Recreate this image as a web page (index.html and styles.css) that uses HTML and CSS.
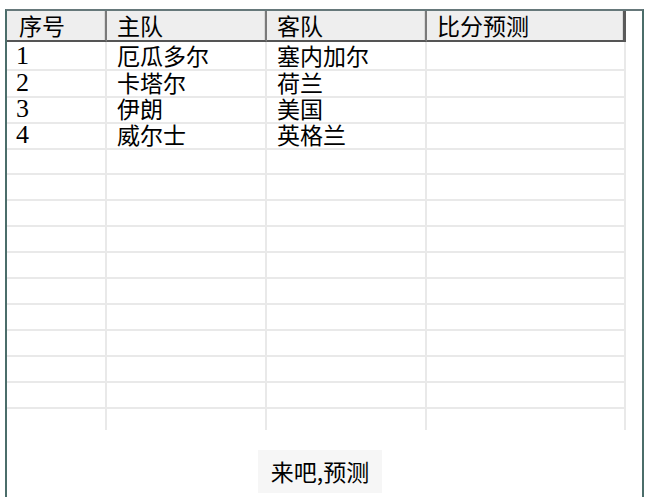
FILE: index.html
```html
<!DOCTYPE html>
<html lang="zh-CN">
<head>
<meta charset="utf-8">
<title>比分预测</title>
<link rel="stylesheet" href="styles.css">
</head>
<body>
<div class="frame">
  <div class="header">
    <div class="hcell first">序号</div>
    <div class="hcell">主队</div>
    <div class="hcell">客队</div>
    <div class="hcell">比分预测</div>
  </div>
  <div class="body">
    <div class="row top"><div class="cell num">1</div><div class="cell">厄瓜多尔</div><div class="cell">塞内加尔</div><div class="cell"></div></div>
    <div class="row"><div class="cell num">2</div><div class="cell">卡塔尔</div><div class="cell">荷兰</div><div class="cell"></div></div>
    <div class="row"><div class="cell num">3</div><div class="cell">伊朗</div><div class="cell">美国</div><div class="cell"></div></div>
    <div class="row"><div class="cell num">4</div><div class="cell">威尔士</div><div class="cell">英格兰</div><div class="cell"></div></div>
    <div class="row"><div class="cell"></div><div class="cell"></div><div class="cell"></div><div class="cell"></div></div>
    <div class="row"><div class="cell"></div><div class="cell"></div><div class="cell"></div><div class="cell"></div></div>
    <div class="row"><div class="cell"></div><div class="cell"></div><div class="cell"></div><div class="cell"></div></div>
    <div class="row"><div class="cell"></div><div class="cell"></div><div class="cell"></div><div class="cell"></div></div>
    <div class="row"><div class="cell"></div><div class="cell"></div><div class="cell"></div><div class="cell"></div></div>
    <div class="row"><div class="cell"></div><div class="cell"></div><div class="cell"></div><div class="cell"></div></div>
    <div class="row"><div class="cell"></div><div class="cell"></div><div class="cell"></div><div class="cell"></div></div>
    <div class="row"><div class="cell"></div><div class="cell"></div><div class="cell"></div><div class="cell"></div></div>
    <div class="row"><div class="cell"></div><div class="cell"></div><div class="cell"></div><div class="cell"></div></div>
    <div class="row"><div class="cell"></div><div class="cell"></div><div class="cell"></div><div class="cell"></div></div>
    <div class="row tail"><div class="cell"></div><div class="cell"></div><div class="cell"></div><div class="cell"></div></div>
  </div>
  <div class="actions">
    <button class="btn">来吧,预测</button>
  </div>
</div>
</body>
</html>
```

FILE: styles.css
```css
html, body {
  margin: 0;
  padding: 0;
  background: #ffffff;
}

body {
  font-family: "Noto Sans CJK SC", "Noto Sans", sans-serif;
  color: #000;
  width: 658px;
  height: 497px;
  overflow: hidden;
}

.frame {
  margin: 9px 0 0 5px;
  width: 639px;
  height: 488px;
  box-sizing: border-box;
  border-top: 2px solid #66787a;
  border-left: 2px solid #4b6d6a;
  border-right: 2px solid #4b6d6a;
  display: flex;
  flex-direction: column;
}

.header {
  display: grid;
  grid-template-columns: 100px 160px 160px 199px;
  height: 31px;
}

.hcell {
  box-sizing: border-box;
  background: #eeeeee;
  border-bottom: 2px solid #555;
  border-right: 2px solid #7a7a7a;
  box-shadow: inset -1px 0 0 #d8d8d8;
  font-size: 23px;
  line-height: 23px;
  padding-left: 10px;
  white-space: nowrap;
  display: flex;
  align-items: center;
}

.hcell.first {
  padding-left: 12px;
}

.hcell:last-child {
  border-right: 3px solid #5a5a5a;
}

.body {
  display: flex;
  flex-direction: column;
}

.row {
  display: grid;
  grid-template-columns: 100px 160px 160px 199px;
  height: 26px;
}

.row.top {
  height: 29px;
}

.cell {
  box-sizing: border-box;
  border-right: 2px solid #e9e9e9;
  border-bottom: 2px solid #e9e9e9;
  font-size: 23px;
  line-height: 23px;
  padding-left: 10px;
  white-space: nowrap;
  display: flex;
  align-items: center;
  padding-bottom: 2px;
}

.row.top .cell {
  padding-bottom: 0;
}

.cell.num {
  font-family: "Liberation Serif", serif;
  font-size: 26px;
  padding-left: 9px;
}

.row.tail {
  height: 21px;
}

.row.tail .cell {
  border-bottom: none;
}

.actions {
  display: flex;
  justify-content: center;
  padding: 20px 9px 0 0;
}

.btn {
  font-family: "Noto Sans CJK SC", "Noto Sans", sans-serif;
  font-size: 23px;
  color: #000;
  background: #f6f6f6;
  border: none;
  width: 124px;
  height: 43px;
  padding: 0;
  line-height: 43px;
}
```
